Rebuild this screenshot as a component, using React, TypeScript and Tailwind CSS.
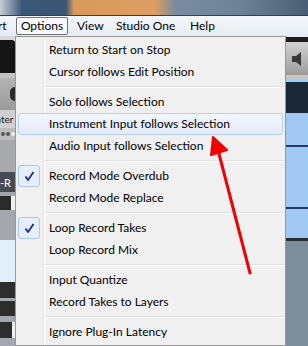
import { Fragment } from 'react';

type Item = { label: string; checked?: boolean; active?: boolean } | 'sep';

const items: Item[] = [
    { label: 'Return to Start on Stop' },
    { label: 'Cursor follows Edit Position' },
    'sep',
    { label: 'Solo follows Selection' },
    { label: 'Instrument Input follows Selection', active: true },
    { label: 'Audio Input follows Selection' },
    'sep',
    { label: 'Record Mode Overdub', checked: true },
    { label: 'Record Mode Replace' },
    'sep',
    { label: 'Loop Record Takes', checked: true },
    { label: 'Loop Record Mix' },
    'sep',
    { label: 'Input Quantize' },
    { label: 'Record Takes to Layers' },
    'sep',
    { label: 'Ignore Plug-In Latency' },
];

const font = "font-['Lato',sans-serif]";

const Check = () => (
    <svg width="11" height="11" viewBox="0 0 11 11">
        <path d="M1.5 5.5 L4 9 L9.5 1" fill="none" stroke="#1a2a8c" strokeWidth="1.8" strokeLinejoin="round" />
    </svg>
);

const LeftStrip = () => (
    <div className={`w-[15px] flex flex-col overflow-hidden text-[10px] leading-none ${font}`}>
        <div className="h-[4px] bg-[#d5d9de]" />
        <div className="h-[33px] bg-[#151515] rounded-tr-[3px]" />
        <div className="h-[5px] bg-[#c2c2c2]" />
        <div className="h-[32px] bg-[linear-gradient(#b4b4b4,#9a9a9a)] flex items-center justify-end">
            <div className="w-[5px] h-[14px] bg-[#2a2a2a] rounded-l-full" />
        </div>
        <div className="h-[18px] bg-[#d0d0d0] flex items-center text-[#222] whitespace-nowrap -ml-[4px]">ater</div>
        <div className="h-[12px] bg-[#bcbcbc] flex items-center gap-[1px] pl-[1px]">
            <span className="w-[4px] h-[4px] rounded-full bg-[#555]" />
            <span className="w-[4px] h-[4px] rounded-full bg-[#555]" />
            <span className="w-[4px] h-[4px] rounded-full bg-[#eee]" />
        </div>
        <div className="h-[32px] bg-[#a7a9ab]" />
        <div className="h-[20px] bg-[#474c52] text-white text-[11px] flex items-center">-R</div>
        <div className="h-[4px] bg-[#a3a5a7]" />
        <div className="h-[14px] bg-[#2b2b2b] mr-[4px]" />
        <div className="h-[30px] bg-[#a4a8ac]" />
        <div className="h-[42px] bg-[#e0f0fa]" />
        <div className="h-[16px] bg-[#2d2d2d]" />
        <div className="h-[3px] bg-[#a4a8ac]" />
        <div className="h-[15px] bg-[#2d2d2d]" />
        <div className="h-[6px] bg-[#a4a8ac]" />
        <div className="h-[16px] bg-[#2d2d2d] mr-[3px]" />
        <div className="flex-1 bg-[#a4a8ac]" />
    </div>
);

const RightStrip = () => (
    <div className="flex-1 flex flex-col overflow-hidden">
        <div className="h-[1px] bg-[#e6eaf0]" />
        <div className="h-[5px] bg-[#1e1e1e]" />
        <div className="h-[33px] bg-[linear-gradient(#d2d2d2,#9c9c9c)] flex items-center justify-end">
            <svg width="20" height="20" viewBox="0 0 20 20">
                <path d="M4 7 L8 7 L13 3 L13 17 L8 13 L4 13 Z" fill="#3a3a3a" />
            </svg>
        </div>
        <div className="h-[5px] bg-[#c6c6c6]" />
        <div className="h-[2px] bg-[#8fd2f4]" />
        <div className="h-[31px] bg-[#1b2838]" />
        <div className="h-[125px] bg-[#a0c8f2] flex flex-col">
            <div className="h-[32px]" />
            <div className="h-[2px] bg-[#1f3a66]" />
            <div className="h-[60px]" />
            <div className="h-[2px] bg-[#1f3a66]" />
        </div>
        <div className="h-[3px] bg-[#2a2e33]" />
        <div className="flex-1 bg-[#7d8e9c]" />
    </div>
);

export default function App() {
    return (
        <div className={`relative w-[308px] h-[346px] overflow-hidden flex flex-col bg-[#f0f0f0] ${font}`}>
            <div className="h-[15px] bg-[linear-gradient(to_right,#c9ced6_0px,#3d5877_22px,#3b5575_66px,#d89a5c_74px,#dc9e62_155px,#7b8ca0_175px,#6e8196_240px,#4b5d74_308px)]" />
            <div className="h-[1px] bg-[#3a3f47]" />
            <div className="h-[20px] bg-[linear-gradient(#f4f7fb,#e6ecf3)] flex items-center text-[12px] text-black whitespace-nowrap">
                <span className="w-[16px] -ml-[2px] pl-0">rt</span>
                <span className="w-[52px] h-[18px] flex items-center justify-center border border-[#717171] rounded-[2px] bg-[#f7f9fc] ml-[2px]">Options</span>
                <span className="ml-[9px] w-[39px]">View</span>
                <span className="w-[74px]">Studio One</span>
                <span>Help</span>
            </div>
            <div className="flex flex-1">
                <LeftStrip />
                <div className="w-[271px] border border-[#979797] bg-[#f0f0f0] p-[2px] shadow-[2px_2px_2px_rgba(0,0,0,0.35)] bg-[linear-gradient(to_right,#f0f0f0_27px,#e2e3e3_27px,#e2e3e3_28px,#ffffff_28px,#ffffff_29px,#f0f0f0_29px)]">
                    {items.map((it, i) =>
                        it === 'sep' ? (
                            <div key={i} className="h-[8px] flex flex-col justify-center pl-[27px]">
                                <div className="h-[1px] bg-[#e0e0e0]" />
                                <div className="h-[1px] bg-white" />
                            </div>
                        ) : (
                            <Fragment key={i}>
                                <div
                                    className={`relative h-[22px] flex items-center pl-[30px] text-[12px] text-black whitespace-nowrap rounded-[3px] border ${
                                        it.active
                                            ? 'border-[#b5cfee] bg-[linear-gradient(#f2f6fc,#e4ecf7)]'
                                            : 'border-transparent'
                                    }`}
                                >
                                    {it.checked && (
                                        <div className="absolute left-[-1px] top-[-1px] w-[22px] h-[22px] rounded-[3px] border border-[#a9c9ef] bg-[#e6eefa] flex items-center justify-center">
                                            <Check />
                                        </div>
                                    )}
                                    {it.label}
                                </div>
                            </Fragment>
                        )
                    )}
                </div>
                <RightStrip />
            </div>
            <svg className="absolute left-0 top-0 pointer-events-none" width="308" height="346" viewBox="0 0 308 346">
                <line x1="218" y1="150" x2="250" y2="273" stroke="#f00000" strokeWidth="3" strokeLinecap="round" />
                <path d="M213 137 L211 155 L227 150 Z" fill="#f00000" stroke="#f00000" strokeWidth="2" strokeLinejoin="round" />
            </svg>
        </div>
    );
}
